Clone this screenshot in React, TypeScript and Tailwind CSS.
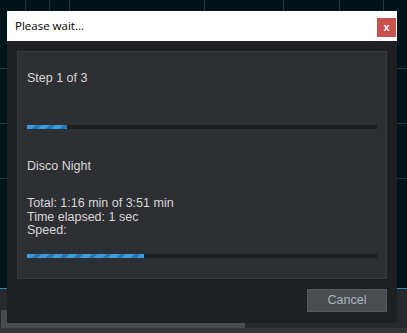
const stripes =
  'bg-[repeating-linear-gradient(135deg,#3b9be2_0px,#3b9be2_6px,#2a77b7_6px,#2a77b7_10px)]';

function ProgressBar({ percent }: { percent: number }) {
  return (
    <div className="h-[4px] w-full bg-[#1d1e21]">
      <div className={`h-full ${stripes}`} style={{ width: `${percent}%` }} />
    </div>
  );
}

function Backdrop() {
  const cols = [25, 49, 69, 204, 283, 339, 383];
  const rows = [68, 123, 178];
  return (
    <div className="absolute inset-0 overflow-hidden">
      <div className="absolute left-0 right-0 top-0 h-[288px] bg-[#01141a]">
        {cols.map((x) => (
          <div key={x} className="absolute top-0 h-full w-px bg-[#26343a]" style={{ left: x }} />
        ))}
        {rows.map((y) => (
          <div key={y} className="absolute left-0 h-px w-full bg-[#26343a]" style={{ top: y }} />
        ))}
      </div>
      <div className="absolute left-0 right-0 top-[288px] h-px bg-[#2f86c8]" />
      <div className="absolute left-0 right-0 top-[289px] bottom-0 bg-[#28292d]" />
      <div className="absolute left-[1px] top-[310px] h-[18px] w-[244px] bg-[#4a4b4e]" />
      <div className="absolute left-0 right-0 top-[328px] bottom-0 bg-[#333438]" />
    </div>
  );
}

export default function App() {
  return (
    <div className="relative h-[333px] w-[407px] overflow-hidden font-['Liberation_Sans',Arial,sans-serif]">
      <Backdrop />

      <div className="absolute left-[7px] top-[11px] flex h-[312px] w-[390px] flex-col bg-[#1f2023]">
        <div className="relative flex h-[30px] items-center bg-white pl-[8px]">
          <span className="font-['Open_Sans',sans-serif] text-[11.5px] text-black">Please wait...</span>
          <button className="absolute right-[1px] top-[7px] flex h-[19px] w-[19px] items-center justify-center bg-[#c9524f] text-[11px] font-bold leading-none text-white">
            x
          </button>
        </div>

        <div className="flex flex-1 flex-col px-[10px] pt-[10px]">
          <div className="flex h-[228px] flex-col border border-[#393a3e] bg-[#2e2f33] px-[9px] pt-[19px] text-[12.5px] leading-[14px] text-[#d8d8d8]">
            <p>Step 1 of 3</p>
            <div className="mt-[40px]">
              <ProgressBar percent={11.4} />
            </div>
            <p className="mt-[30px]">Disco Night</p>
            <div className="mt-[24px] leading-[13.5px]">
              <p>Total: 1:16 min of 3:51 min</p>
              <p>Time elapsed: 1 sec</p>
              <p>Speed:</p>
            </div>
            <div className="mt-[16px]">
              <ProgressBar percent={33.4} />
            </div>
          </div>

          <div className="mt-[10px] flex justify-end">
            <button className="h-[23px] w-[80px] border border-[#56585b] bg-[#4a4d50] text-[12.5px] text-[#a9b3c0]">
              Cancel
            </button>
          </div>
        </div>
      </div>
    </div>
  );
}
